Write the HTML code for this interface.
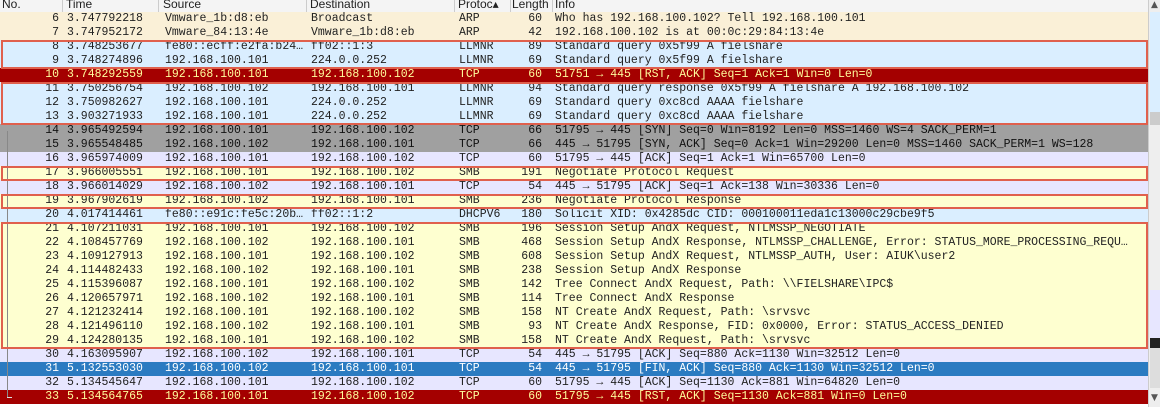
<!DOCTYPE html>
<html><head><style>
body{margin:0;width:1160px;height:407px;overflow:hidden;background:#fff;position:relative;font-family:"Liberation Mono",monospace;font-size:11.5px}
.h{position:absolute;left:0;top:0;width:1148px;height:12px;background:#f4f4f4;border-bottom:1px solid #bbb;font-family:"Liberation Sans",sans-serif;font-size:12px;line-height:11px;color:#222}
.h span{position:absolute;top:-1px}
.h i{position:absolute;top:0;width:1px;height:12px;background:#ccc}
.r{position:absolute;left:0;width:1148px;height:14px;line-height:14px;color:#222;white-space:pre}
.r span{position:absolute;top:0}
.n{right:1089px;text-align:right}
.t{left:67px}.s{left:165px}.d{left:311px}.p{left:459px}.l{right:606px;text-align:right}.i{left:555px}
.arp{background:#faf0d7}.ll{background:#daeeff}.rst{background:#a40000;color:#fffc9c}
.gr{background:#a0a0a0;color:#111}.tcp{background:#e7e6ff}.smb{background:#feffd0}.sel{background:#2b7bc1;color:#fff}
.b{position:absolute;border:2px solid #e0604d;box-sizing:border-box;left:1px;width:1147px}
.sb{position:absolute;left:1148px;top:0;width:12px;height:407px;background:#eee;border-left:1px solid #ccc}
</style></head><body>
<div class="h"><span style="left:2px">No.</span><i style="left:62px"></i><span style="left:66px">Time</span><i style="left:158px"></i><span style="left:163px">Source</span><i style="left:306px"></i><span style="left:310px">Destination</span><i style="left:454px"></i><span style="left:458px">Protoc▴</span><i style="left:510px"></i><span style="left:512px">Length</span><i style="left:552px"></i><span style="left:555px">Info</span></div>
<div class="r arp" style="top:12px"><span class="n">6</span><span class="t">3.747792218</span><span class="s">Vmware_1b:d8:eb</span><span class="d">Broadcast</span><span class="p">ARP</span><span class="l">60</span><span class="i">Who has 192.168.100.102? Tell 192.168.100.101</span></div>
<div class="r arp" style="top:26px"><span class="n">7</span><span class="t">3.747952172</span><span class="s">Vmware_84:13:4e</span><span class="d">Vmware_1b:d8:eb</span><span class="p">ARP</span><span class="l">42</span><span class="i">192.168.100.102 is at 00:0c:29:84:13:4e</span></div>
<div class="r ll" style="top:40px"><span class="n">8</span><span class="t">3.748253677</span><span class="s">fe80::ecff:e2fa:b24…</span><span class="d">ff02::1:3</span><span class="p">LLMNR</span><span class="l">89</span><span class="i">Standard query 0x5f99 A fielshare</span></div>
<div class="r ll" style="top:54px"><span class="n">9</span><span class="t">3.748274896</span><span class="s">192.168.100.101</span><span class="d">224.0.0.252</span><span class="p">LLMNR</span><span class="l">69</span><span class="i">Standard query 0x5f99 A fielshare</span></div>
<div class="r rst" style="top:68px"><span class="n">10</span><span class="t">3.748292559</span><span class="s">192.168.100.101</span><span class="d">192.168.100.102</span><span class="p">TCP</span><span class="l">60</span><span class="i">51751 → 445 [RST, ACK] Seq=1 Ack=1 Win=0 Len=0</span></div>
<div class="r ll" style="top:82px"><span class="n">11</span><span class="t">3.750256754</span><span class="s">192.168.100.102</span><span class="d">192.168.100.101</span><span class="p">LLMNR</span><span class="l">94</span><span class="i">Standard query response 0x5f99 A fielshare A 192.168.100.102</span></div>
<div class="r ll" style="top:96px"><span class="n">12</span><span class="t">3.750982627</span><span class="s">192.168.100.101</span><span class="d">224.0.0.252</span><span class="p">LLMNR</span><span class="l">69</span><span class="i">Standard query 0xc8cd AAAA fielshare</span></div>
<div class="r ll" style="top:110px"><span class="n">13</span><span class="t">3.903271933</span><span class="s">192.168.100.101</span><span class="d">224.0.0.252</span><span class="p">LLMNR</span><span class="l">69</span><span class="i">Standard query 0xc8cd AAAA fielshare</span></div>
<div class="r gr" style="top:124px"><span class="n">14</span><span class="t">3.965492594</span><span class="s">192.168.100.101</span><span class="d">192.168.100.102</span><span class="p">TCP</span><span class="l">66</span><span class="i">51795 → 445 [SYN] Seq=0 Win=8192 Len=0 MSS=1460 WS=4 SACK_PERM=1</span></div>
<div class="r gr" style="top:138px"><span class="n">15</span><span class="t">3.965548485</span><span class="s">192.168.100.102</span><span class="d">192.168.100.101</span><span class="p">TCP</span><span class="l">66</span><span class="i">445 → 51795 [SYN, ACK] Seq=0 Ack=1 Win=29200 Len=0 MSS=1460 SACK_PERM=1 WS=128</span></div>
<div class="r tcp" style="top:152px"><span class="n">16</span><span class="t">3.965974009</span><span class="s">192.168.100.101</span><span class="d">192.168.100.102</span><span class="p">TCP</span><span class="l">60</span><span class="i">51795 → 445 [ACK] Seq=1 Ack=1 Win=65700 Len=0</span></div>
<div class="r smb" style="top:166px"><span class="n">17</span><span class="t">3.966005551</span><span class="s">192.168.100.101</span><span class="d">192.168.100.102</span><span class="p">SMB</span><span class="l">191</span><span class="i">Negotiate Protocol Request</span></div>
<div class="r tcp" style="top:180px"><span class="n">18</span><span class="t">3.966014029</span><span class="s">192.168.100.102</span><span class="d">192.168.100.101</span><span class="p">TCP</span><span class="l">54</span><span class="i">445 → 51795 [ACK] Seq=1 Ack=138 Win=30336 Len=0</span></div>
<div class="r smb" style="top:194px"><span class="n">19</span><span class="t">3.967902619</span><span class="s">192.168.100.102</span><span class="d">192.168.100.101</span><span class="p">SMB</span><span class="l">236</span><span class="i">Negotiate Protocol Response</span></div>
<div class="r ll" style="top:208px"><span class="n">20</span><span class="t">4.017414461</span><span class="s">fe80::e91c:fe5c:20b…</span><span class="d">ff02::1:2</span><span class="p">DHCPV6</span><span class="l">180</span><span class="i">Solicit XID: 0x4285dc CID: 000100011eda1c13000c29cbe9f5</span></div>
<div class="r smb" style="top:222px"><span class="n">21</span><span class="t">4.107211031</span><span class="s">192.168.100.101</span><span class="d">192.168.100.102</span><span class="p">SMB</span><span class="l">196</span><span class="i">Session Setup AndX Request, NTLMSSP_NEGOTIATE</span></div>
<div class="r smb" style="top:236px"><span class="n">22</span><span class="t">4.108457769</span><span class="s">192.168.100.102</span><span class="d">192.168.100.101</span><span class="p">SMB</span><span class="l">468</span><span class="i">Session Setup AndX Response, NTLMSSP_CHALLENGE, Error: STATUS_MORE_PROCESSING_REQU…</span></div>
<div class="r smb" style="top:250px"><span class="n">23</span><span class="t">4.109127913</span><span class="s">192.168.100.101</span><span class="d">192.168.100.102</span><span class="p">SMB</span><span class="l">608</span><span class="i">Session Setup AndX Request, NTLMSSP_AUTH, User: AIUK\user2</span></div>
<div class="r smb" style="top:264px"><span class="n">24</span><span class="t">4.114482433</span><span class="s">192.168.100.102</span><span class="d">192.168.100.101</span><span class="p">SMB</span><span class="l">238</span><span class="i">Session Setup AndX Response</span></div>
<div class="r smb" style="top:278px"><span class="n">25</span><span class="t">4.115396087</span><span class="s">192.168.100.101</span><span class="d">192.168.100.102</span><span class="p">SMB</span><span class="l">142</span><span class="i">Tree Connect AndX Request, Path: \\FIELSHARE\IPC$</span></div>
<div class="r smb" style="top:292px"><span class="n">26</span><span class="t">4.120657971</span><span class="s">192.168.100.102</span><span class="d">192.168.100.101</span><span class="p">SMB</span><span class="l">114</span><span class="i">Tree Connect AndX Response</span></div>
<div class="r smb" style="top:306px"><span class="n">27</span><span class="t">4.121232414</span><span class="s">192.168.100.101</span><span class="d">192.168.100.102</span><span class="p">SMB</span><span class="l">158</span><span class="i">NT Create AndX Request, Path: \srvsvc</span></div>
<div class="r smb" style="top:320px"><span class="n">28</span><span class="t">4.121496110</span><span class="s">192.168.100.102</span><span class="d">192.168.100.101</span><span class="p">SMB</span><span class="l">93</span><span class="i">NT Create AndX Response, FID: 0x0000, Error: STATUS_ACCESS_DENIED</span></div>
<div class="r smb" style="top:334px"><span class="n">29</span><span class="t">4.124280135</span><span class="s">192.168.100.101</span><span class="d">192.168.100.102</span><span class="p">SMB</span><span class="l">158</span><span class="i">NT Create AndX Request, Path: \srvsvc</span></div>
<div class="r tcp" style="top:348px"><span class="n">30</span><span class="t">4.163095907</span><span class="s">192.168.100.102</span><span class="d">192.168.100.101</span><span class="p">TCP</span><span class="l">54</span><span class="i">445 → 51795 [ACK] Seq=880 Ack=1130 Win=32512 Len=0</span></div>
<div class="r sel" style="top:362px"><span class="n">31</span><span class="t">5.132553030</span><span class="s">192.168.100.102</span><span class="d">192.168.100.101</span><span class="p">TCP</span><span class="l">54</span><span class="i">445 → 51795 [FIN, ACK] Seq=880 Ack=1130 Win=32512 Len=0</span></div>
<div class="r tcp" style="top:376px"><span class="n">32</span><span class="t">5.134545647</span><span class="s">192.168.100.101</span><span class="d">192.168.100.102</span><span class="p">TCP</span><span class="l">60</span><span class="i">51795 → 445 [ACK] Seq=1130 Ack=881 Win=64820 Len=0</span></div>
<div class="r rst" style="top:390px"><span class="n">33</span><span class="t">5.134564765</span><span class="s">192.168.100.101</span><span class="d">192.168.100.102</span><span class="p">TCP</span><span class="l">60</span><span class="i">51795 → 445 [RST, ACK] Seq=1130 Ack=881 Win=0 Len=0</span></div>
<div style="position:absolute;left:7px;top:131px;width:1px;height:266px;background:#888"></div>
<div style="position:absolute;left:7px;top:397px;width:5px;height:1px;background:#ddd"></div>
<div class="b" style="top:40px;height:29px"></div>
<div class="b" style="top:82px;height:43px"></div>
<div class="b" style="top:166px;height:15px"></div>
<div class="b" style="top:194px;height:15px"></div>
<div class="b" style="top:222px;height:127px"></div>
<div class="sb">
<div style="position:absolute;top:0;left:2px;width:8px;height:12px;color:#555;font-size:9px;font-family:'DejaVu Sans',sans-serif">▲</div>
<div style="position:absolute;top:12px;left:1px;width:10px;height:100px;background:#daeeff"></div>
<div style="position:absolute;top:112px;left:1px;width:10px;height:13px;background:#ccc"></div>
<div style="position:absolute;top:290px;left:1px;width:10px;height:50px;background:#e7e6ff"></div>
<div style="position:absolute;top:338px;left:1px;width:10px;height:10px;background:#222"></div>
<div style="position:absolute;top:348px;left:1px;width:10px;height:40px;background:#ddd"></div>
<div style="position:absolute;top:393px;left:2px;color:#555;font-size:9px;font-family:'DejaVu Sans',sans-serif">▼</div>
</div>
</body></html>
